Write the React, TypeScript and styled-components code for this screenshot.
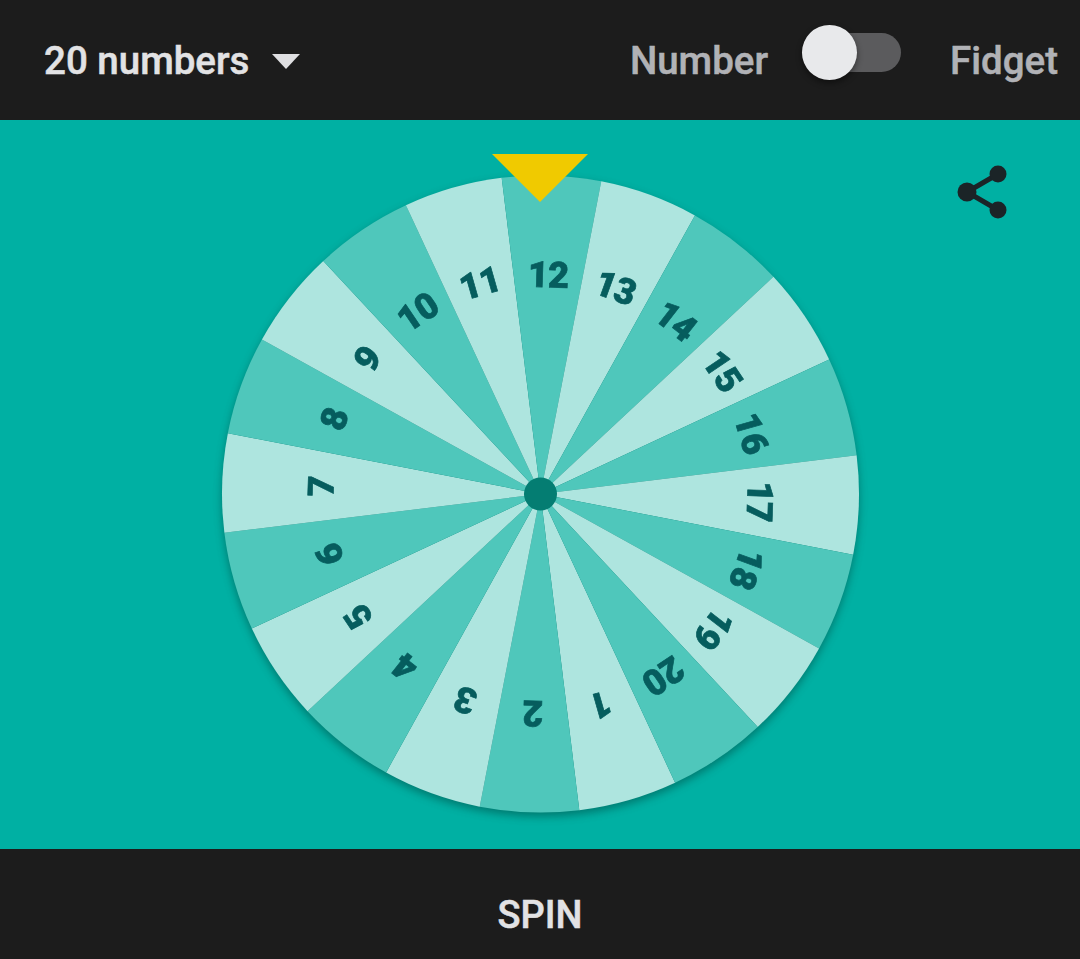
import { createGlobalStyle } from 'styled-components'
import styled from 'styled-components'

const GlobalStyle = createGlobalStyle`
  html, body {
    margin: 0;
    padding: 0;
    background: #1c1c1c;
  }
`

const RADIUS = 318.5
const LABEL_RADIUS = 219
const STEP = 18
const OFFSET = 2

const point = (angle: number, r: number) => {
  const rad = (angle * Math.PI) / 180
  return `${(Math.sin(rad) * r).toFixed(2)} ${(-Math.cos(rad) * r).toFixed(2)}`
}

const numbers = Array.from({ length: 20 }, (_, i) => i + 1)

const Wheel = () => (
  <WheelSvg viewBox="-320.5 -320 640 640">
    {numbers.map(n => {
      const angle = OFFSET + (n - 12) * STEP
      const a = point(angle - STEP / 2, RADIUS)
      const b = point(angle + STEP / 2, RADIUS)
      return (
        <g key={n}>
          <path
            d={`M0 0 L${a} A${RADIUS} ${RADIUS} 0 0 1 ${b} Z`}
            fill={n % 2 === 0 ? '#4fc7bb' : '#aee5df'}
          />
          <WheelLabel
            textAnchor="middle"
            dominantBaseline="central"
            transform={`rotate(${angle}) translate(0 ${-LABEL_RADIUS})`}
          >
            {n}
          </WheelLabel>
        </g>
      )
    })}
    <circle r="16.5" fill="#047d72" />
  </WheelSvg>
)

export default function App() {
  return (
    <Page>
      <GlobalStyle />
      <TopBar>
        <Select>
          <SelectText>20 numbers</SelectText>
          <Caret />
        </Select>
        <Mode>
          <ModeLabel>Number</ModeLabel>
          <Toggle>
            <Thumb />
          </Toggle>
          <ModeLabel>Fidget</ModeLabel>
        </Mode>
      </TopBar>
      <Stage>
        <WheelWrap>
          <Wheel />
          <Pointer />
        </WheelWrap>
        <ShareIcon viewBox="0 0 50 54">
          <path d="M41 9 L10 27 L41 45" fill="none" stroke="#1b2427" strokeWidth="5" />
          <circle cx="41" cy="9" r="8.5" fill="#1b2427" />
          <circle cx="10" cy="27" r="9.5" fill="#1b2427" />
          <circle cx="41" cy="45" r="8.5" fill="#1b2427" />
        </ShareIcon>
      </Stage>
      <BottomBar>SPIN</BottomBar>
    </Page>
  )
}

const Page = styled.div`
  display: flex;
  flex-direction: column;
  width: 1080px;
  height: 959px;
  overflow: hidden;
  font-family: Roboto, "Liberation Sans", sans-serif;
  font-weight: 500;
  -webkit-text-stroke: 0.5px currentColor;
  background: #1c1c1c;
`

const TopBar = styled.header`
  display: flex;
  align-items: center;
  justify-content: space-between;
  height: 120px;
  padding: 0 22px 0 44px;
  box-sizing: border-box;
`

const Select = styled.div`
  display: flex;
  align-items: center;
  gap: 23px;
`

const SelectText = styled.span`
  font-size: 38.5px;
  color: #e2e2e4;
`

const Caret = styled.span`
  width: 0;
  height: 0;
  margin-top: 2px;
  border-left: 14px solid transparent;
  border-right: 14px solid transparent;
  border-top: 15px solid #dfdfe1;
`

const Mode = styled.div`
  display: flex;
  align-items: center;
`

const ModeLabel = styled.span`
  font-size: 38.5px;
  color: #b1b2b6;
`

const Toggle = styled.div`
  position: relative;
  width: 99px;
  height: 39px;
  margin: 0 49px 15px 34px;
  border-radius: 20px;
  background: #5b5b5d;
`

const Thumb = styled.span`
  position: absolute;
  top: -8px;
  left: 0;
  width: 55px;
  height: 55px;
  border-radius: 50%;
  background: #e8e9eb;
  box-shadow: 0 3px 6px rgba(0, 0, 0, 0.45);
`

const Stage = styled.main`
  position: relative;
  display: flex;
  justify-content: center;
  height: 729px;
  padding-top: 54px;
  box-sizing: border-box;
  background: #00b0a3;
`

const WheelWrap = styled.div`
  position: relative;
  width: 640px;
  height: 640px;
`

const WheelSvg = styled.svg`
  display: block;
  width: 640px;
  height: 640px;
  overflow: visible;
  filter: drop-shadow(0 4px 4px rgba(0, 40, 35, 0.4));
`

const WheelLabel = styled.text`
  font-family: Roboto, "Liberation Sans", sans-serif;
  font-size: 36px;
  font-weight: 900;
  letter-spacing: -0.5px;
  fill: #065d5e;
  stroke: #065d5e;
  stroke-width: 0.7px;
`

const Pointer = styled.span`
  position: absolute;
  top: -20px;
  left: 50%;
  width: 0;
  height: 0;
  margin-left: -48px;
  border-left: 48px solid transparent;
  border-right: 48px solid transparent;
  border-top: 48px solid #f0ca00;
`

const ShareIcon = styled.svg`
  position: absolute;
  top: 45px;
  right: 73px;
  width: 50px;
  height: 54px;
`

const BottomBar = styled.footer`
  display: flex;
  align-items: center;
  justify-content: center;
  height: 110px;
  padding-top: 22px;
  box-sizing: border-box;
  font-size: 38px;
  color: #e2e2e4;
`
